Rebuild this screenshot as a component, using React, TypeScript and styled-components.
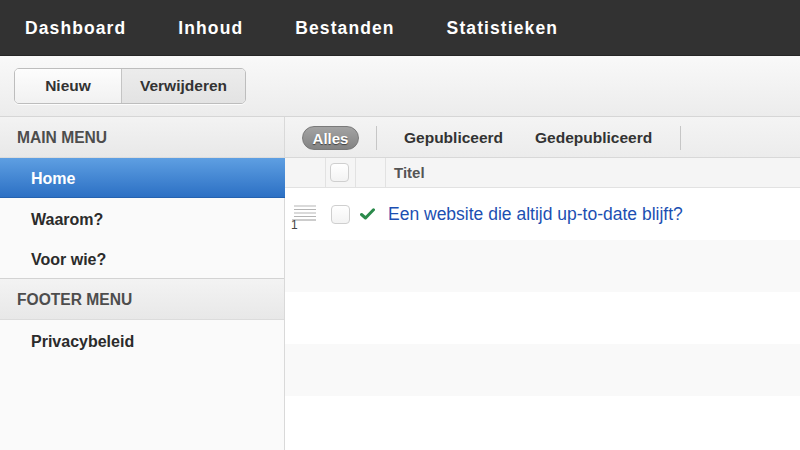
import styled, { createGlobalStyle } from "styled-components";

const GlobalStyle = createGlobalStyle`
  html, body {
    margin: 0;
    padding: 0;
    height: 100%;
    background: #ffffff;
  }
  #root {
    height: 100%;
  }
  * {
    box-sizing: border-box;
  }
`;

const Page = styled.div`
  height: 450px;
  display: flex;
  flex-direction: column;
  font-family: "Liberation Sans", Arial, sans-serif;
  color: #333;
  overflow: hidden;
`;

const NavBar = styled.nav`
  height: 56px;
  flex-shrink: 0;
  background: #323232;
  border-bottom: 1px solid #262626;
  display: flex;
  align-items: center;
  padding-left: 25px;
  gap: 52px;
`;

const NavItem = styled.a`
  color: #fff;
  font-size: 17.5px;
  font-weight: bold;
  letter-spacing: 1.1px;
  text-decoration: none;
  margin-top: 1px;
`;

const Toolbar = styled.div`
  height: 61px;
  flex-shrink: 0;
  background: linear-gradient(#f9f9f9, #ececec);
  border-bottom: 1px solid #d6d6d6;
  display: flex;
  align-items: center;
  padding-left: 14px;
`;

const ButtonGroup = styled.div`
  display: flex;
  height: 36px;
  border: 1px solid #bdbdbd;
  border-radius: 5px;
  overflow: hidden;
  box-shadow: 0 1px 0 rgba(255, 255, 255, 0.8);
`;

const ToolButton = styled.button<{ $shade?: boolean }>`
  font-family: inherit;
  font-size: 15.5px;
  font-weight: bold;
  color: #333;
  border: none;
  padding: 0;
  width: ${(p) => (p.$shade ? "124px" : "106px")};
  background: ${(p) =>
    p.$shade ? "linear-gradient(#ececec, #e3e3e3)" : "linear-gradient(#fdfdfd, #f1f1f1)"};
  & + & {
    border-left: 1px solid #c4c4c4;
  }
`;

const Main = styled.div`
  flex: 1;
  display: flex;
  min-height: 0;
`;

const Sidebar = styled.aside`
  width: 285px;
  flex-shrink: 0;
  background: #fafafa;
  border-right: 1px solid #d9d9d9;
  display: flex;
  flex-direction: column;
`;

const MenuHeader = styled.div<{ $top?: boolean }>`
  height: ${(p) => (p.$top ? "41px" : "42px")};
  display: flex;
  align-items: center;
  padding: 2px 0 0 17px;
  font-size: 15.6px;
  font-weight: bold;
  color: #4d4d4d;
  background: linear-gradient(#f3f3f3, #e8e8e8);
  border-top: ${(p) => (p.$top ? "none" : "1px solid #d3d3d3")};
  border-bottom: 1px solid #dcdcdc;
`;

const MenuItem = styled.div<{ $active?: boolean }>`
  height: 40px;
  display: flex;
  align-items: center;
  padding: 3px 0 0 31px;
  font-size: 16px;
  font-weight: bold;
  color: ${(p) => (p.$active ? "#fff" : "#2b2b2b")};
  background: ${(p) => (p.$active ? "linear-gradient(#5e9fe2, #2c70c4)" : "transparent")};
  border-bottom: ${(p) => (p.$active ? "1px solid #2462b0" : "none")};
  margin-right: ${(p) => (p.$active ? "-1px" : "0")};
`;

const Content = styled.section`
  flex: 1;
  display: flex;
  flex-direction: column;
  background: #fff;
`;

const FilterBar = styled.div`
  height: 41px;
  flex-shrink: 0;
  display: flex;
  align-items: center;
  padding: 2px 0 0 17px;
  background: linear-gradient(#f4f4f4, #ececec);
  border-bottom: 1px solid #d8d8d8;
`;

const Pill = styled.span`
  display: inline-flex;
  align-items: center;
  justify-content: center;
  width: 57px;
  height: 24px;
  border-radius: 12px;
  background: linear-gradient(#a3a3a3, #838383);
  border: 1px solid #7a7a7a;
  color: #fff;
  font-size: 15px;
  font-weight: bold;
  text-shadow: 0 1px 1px rgba(0, 0, 0, 0.55);
`;

const Divider = styled.span`
  width: 1px;
  height: 24px;
  background: #c6c6c6;
  margin: 0 27px 0 17px;
`;

const FilterLink = styled.span`
  font-size: 15.5px;
  font-weight: bold;
  color: #333;
  & + & {
    margin-left: 32px;
  }
  & + ${Divider} {
    margin-left: 28px;
  }
`;

const TableGrid = styled.div`
  display: grid;
  grid-template-columns: 41px 30px 30px 1fr;
`;

const HeadCell = styled.div<{ $noBorder?: boolean }>`
  height: 30px;
  background: #f5f5f5;
  border-bottom: 1px solid #e2e2e2;
  border-right: ${(p) => (p.$noBorder ? "none" : "1px solid #e2e2e2")};
  display: flex;
  align-items: center;
  justify-content: center;
  font-size: 15px;
  font-weight: bold;
  color: #555;
`;

const TitleHead = styled(HeadCell)`
  justify-content: flex-start;
  padding-left: 8px;
`;

const Row = styled.div<{ $striped?: boolean }>`
  grid-column: 1 / -1;
  height: 52px;
  display: grid;
  grid-template-columns: 41px 30px 30px 1fr;
  align-items: center;
  background: ${(p) => (p.$striped ? "#f9f9f9" : "#fff")};
`;

const Checkbox = styled.span`
  width: 19px;
  height: 19px;
  border: 1px solid #cfcfcf;
  border-radius: 4px;
  background: linear-gradient(#ffffff, #f3f3f3);
  justify-self: center;
  margin-right: 2px;
`;

const HandleCell = styled.div`
  position: relative;
  height: 100%;
  display: flex;
  align-items: center;
  padding-left: 7px;
`;

const RowNumber = styled.span`
  position: absolute;
  left: 6px;
  top: 30px;
  font-size: 12px;
  color: #444;
`;

const LinkText = styled.a`
  font-size: 17.5px;
  color: #1c4fb2;
  text-decoration: none;
  padding: 1px 0 0 2px;
`;

const CheckCell = styled.div`
  display: flex;
  justify-content: flex-start;
  padding-left: 4px;
`;

function DragHandle() {
  return (
    <svg width="24" height="18" viewBox="0 0 24 18">
      {[1, 4.5, 8, 11.5].map((y) => (
        <line key={y} x1="2" y1={y} x2="24" y2={y} stroke="#b5b5b5" strokeWidth="1" />
      ))}
      <line x1="0" y1="15" x2="24" y2="15" stroke="#9a9a9a" strokeWidth="1" />
    </svg>
  );
}

function CheckMark() {
  return (
    <svg width="15" height="12" viewBox="0 0 15 12">
      <path d="M1.5 6.5 L5.5 10 L13.5 1.8" fill="none" stroke="#2b8a4b" strokeWidth="3" strokeLinecap="round" strokeLinejoin="round" />
    </svg>
  );
}

const rows = [1, 2, 3, 4, 5];

export default function App() {
  return (
    <>
      <GlobalStyle />
      <Page>
        <NavBar>
          <NavItem>Dashboard</NavItem>
          <NavItem>Inhoud</NavItem>
          <NavItem>Bestanden</NavItem>
          <NavItem>Statistieken</NavItem>
        </NavBar>
        <Toolbar>
          <ButtonGroup>
            <ToolButton>Nieuw</ToolButton>
            <ToolButton $shade>Verwijderen</ToolButton>
          </ButtonGroup>
        </Toolbar>
        <Main>
          <Sidebar>
            <MenuHeader $top>MAIN MENU</MenuHeader>
            <MenuItem $active>Home</MenuItem>
            <MenuItem>Waarom?</MenuItem>
            <MenuItem>Voor wie?</MenuItem>
            <MenuHeader>FOOTER MENU</MenuHeader>
            <MenuItem>Privacybeleid</MenuItem>
          </Sidebar>
          <Content>
            <FilterBar>
              <Pill>Alles</Pill>
              <Divider />
              <FilterLink>Gepubliceerd</FilterLink>
              <FilterLink>Gedepubliceerd</FilterLink>
              <Divider />
            </FilterBar>
            <TableGrid>
              <HeadCell />
              <HeadCell>
                <Checkbox />
              </HeadCell>
              <HeadCell />
              <TitleHead $noBorder>Titel</TitleHead>
              {rows.map((n) =>
                n === 1 ? (
                  <Row key={n}>
                    <HandleCell>
                      <DragHandle />
                      <RowNumber>1</RowNumber>
                    </HandleCell>
                    <Checkbox />
                    <CheckCell>
                      <CheckMark />
                    </CheckCell>
                    <LinkText>Een website die altijd up-to-date blijft?</LinkText>
                  </Row>
                ) : (
                  <Row key={n} $striped={n % 2 === 0} />
                )
              )}
            </TableGrid>
          </Content>
        </Main>
      </Page>
    </>
  );
}
